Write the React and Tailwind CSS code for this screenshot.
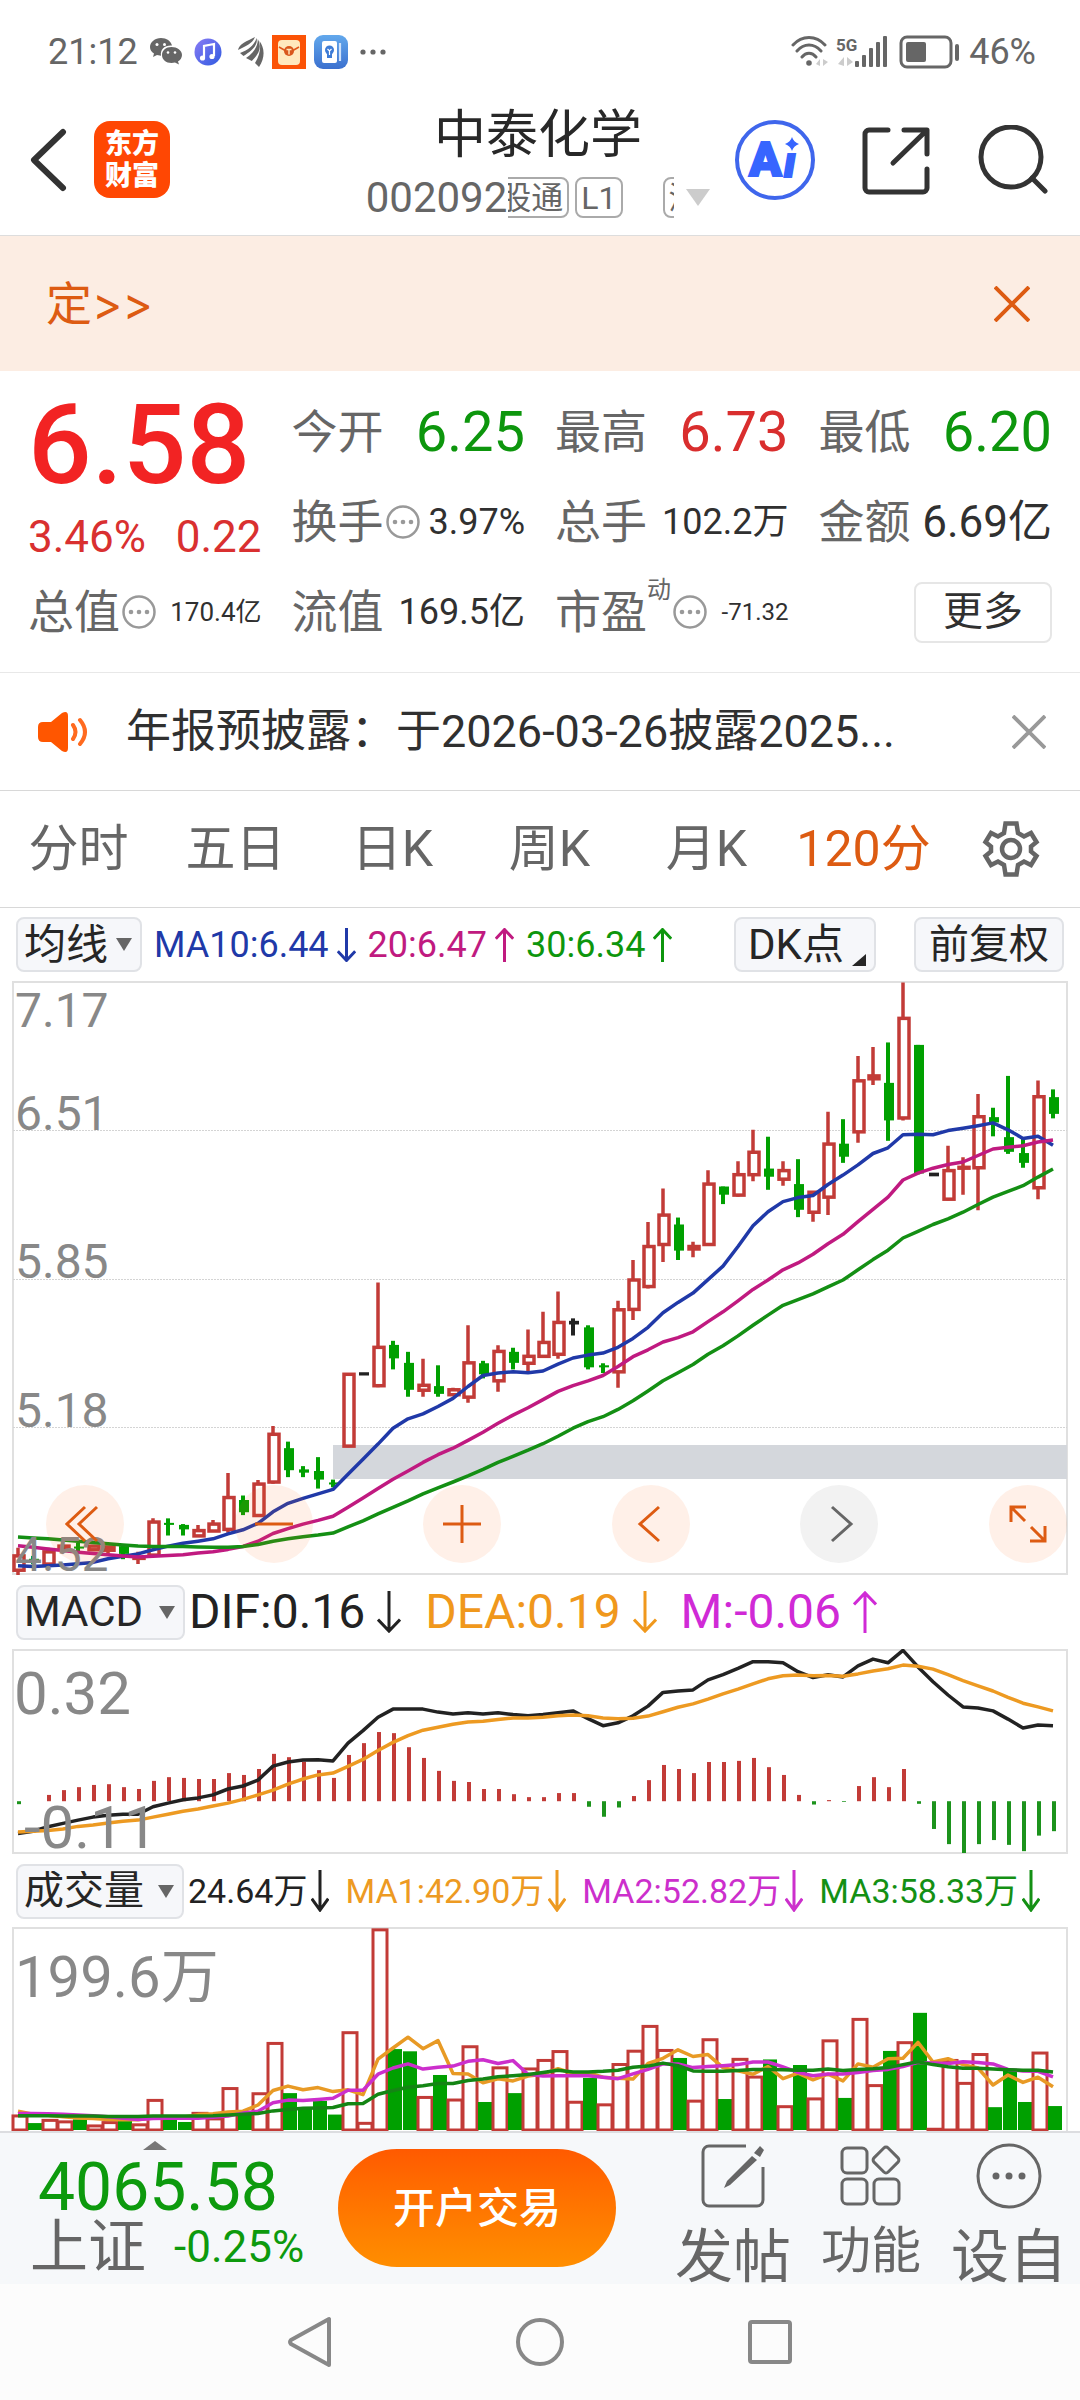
import React, { useState } from 'react';

const RED = '#c23b37';
const GREEN = '#00a000';
const STEP = 15;
const FIRST_X = 18;

const TABS = ['分时', '五日', '日K', '周K', '月K', '120分'];

// [color, high, top, bottom, low]
const CANDLES = [
    ['r', 1440, 1460, 1495, 1508], ['g', 1460, 1467, 1475, 1480], ['r', 1440, 1450, 1480, 1480], ['r', 1433, 1436, 1443, 1443],
    ['g', 1428, 1437, 1442, 1450], ['r', 1433, 1436, 1445, 1445], ['r', 1436, 1438, 1446, 1460], ['g', 1436, 1436, 1455, 1468],
    ['r', 1450, 1464, 1466, 1480], ['r', 1368, 1377, 1458, 1462], ['g', 1368, 1379, 1384, 1410], ['g', 1382, 1384, 1395, 1410],
    ['r', 1384, 1398, 1411, 1413], ['r', 1372, 1382, 1399, 1400], ['r', 1257, 1317, 1395, 1403], ['g', 1312, 1323, 1353, 1360],
    ['r', 1274, 1284, 1361, 1364], ['r', 1142, 1162, 1279, 1283], ['g', 1180, 1196, 1250, 1267], ['g', 1240, 1248, 1256, 1267],
    ['g', 1218, 1252, 1273, 1295], ['g', 1273, 1280, 1285, 1292], ['r', 1012, 1015, 1191, 1194], ['k', 1012, 1010, 1018, 1016],
    ['r', 790, 949, 1043, 1047], ['g', 933, 943, 976, 1003], ['g', 960, 987, 1053, 1070], ['r', 977, 1042, 1054, 1070],
    ['g', 993, 1044, 1063, 1070], ['r', 1048, 1053, 1065, 1067], ['r', 895, 987, 1071, 1085], ['g', 982, 988, 1015, 1025],
    ['r', 944, 959, 1031, 1058], ['g', 950, 960, 987, 1003], ['r', 905, 971, 988, 1007], ['r', 862, 937, 971, 975],
    ['r', 812, 888, 966, 977], ['k', 878, 884, 893, 920], ['g', 895, 900, 998, 1003], ['g', 988, 993, 998, 1012],
    ['r', 835, 857, 1009, 1048], ['r', 735, 784, 856, 882], ['r', 642, 702, 800, 805], ['r', 560, 625, 697, 740],
    ['g', 631, 648, 712, 735], ['r', 690, 702, 708, 728], ['r', 515, 549, 697, 700], ['g', 555, 555, 575, 598],
    ['r', 493, 526, 576, 580], ['r', 416, 471, 526, 542], ['g', 433, 511, 531, 563], ['r', 493, 516, 537, 553],
    ['g', 488, 549, 612, 630], ['r', 566, 569, 618, 641], ['r', 372, 451, 581, 625], ['g', 390, 450, 482, 497],
    ['r', 235, 296, 421, 448], ['r', 213, 284, 291, 306], ['g', 202, 301, 393, 443], ['r', 55, 143, 387, 393],
    ['g', 208, 208, 523, 525], ['k', 522, 521, 530, 526], ['r', 455, 516, 586, 589], ['r', 483, 508, 510, 575],
    ['r', 328, 384, 509, 613], ['g', 362, 385, 398, 432], ['g', 284, 434, 470, 475], ['g', 437, 473, 497, 509],
    ['r', 295, 335, 558, 586], ['g', 317, 336, 377, 388],
];
const MA10 = [1484, 1486, 1484, 1482, 1479, 1476, 1467, 1461, 1455, 1445, 1436, 1429, 1424, 1418, 1406, 1396, 1380, 1352, 1331, 1319, 1308, 1297, 1260, 1223, 1186, 1147, 1124, 1112, 1094, 1074, 1045, 1018, 1012, 1009, 1011, 1007, 990, 975, 968, 963, 949, 927, 900, 864, 839, 816, 783, 750, 702, 651, 617, 592, 582, 577, 550, 527, 502, 474, 460, 428, 427, 428, 418, 412, 406, 399, 416, 437, 432, 454];
const MA20 = [1435, 1439, 1443, 1447, 1451, 1454, 1457, 1460, 1463, 1461, 1459, 1457, 1453, 1450, 1444, 1437, 1424, 1405, 1393, 1382, 1373, 1363, 1341, 1318, 1295, 1272, 1252, 1231, 1212, 1196, 1177, 1157, 1135, 1115, 1097, 1077, 1057, 1043, 1031, 1018, 996, 972, 955, 936, 925, 911, 886, 862, 835, 807, 784, 759, 742, 721, 695, 672, 641, 611, 581, 539, 522, 510, 501, 495, 479, 463, 459, 455, 446, 441];
const MA30 = [1414, 1416, 1418, 1421, 1424, 1427, 1430, 1433, 1436, 1437, 1437, 1437, 1438, 1439, 1439, 1437, 1432, 1424, 1418, 1413, 1409, 1404, 1389, 1374, 1357, 1341, 1325, 1308, 1293, 1279, 1264, 1248, 1231, 1216, 1201, 1185, 1167, 1147, 1131, 1119, 1101, 1080, 1056, 1031, 1011, 991, 966, 945, 921, 895, 870, 846, 832, 818, 801, 784, 759, 734, 711, 681, 665, 648, 634, 618, 599, 581, 567, 553, 532, 512];

const MACD_ZERO = 652;
const MACD_BARS = [660, 652, 635, 622, 614, 608, 606, 614, 619, 597, 587, 589, 592, 592, 576, 581, 565, 524, 533, 545, 568, 589, 527, 495, 465, 468, 506, 535, 570, 597, 600, 619, 619, 633, 641, 641, 630, 630, 667, 694, 669, 638, 595, 554, 565, 576, 546, 546, 543, 535, 560, 581, 635, 661, 649, 654, 611, 587, 614, 565, 659, 727, 768, 792, 768, 757, 770, 787, 745, 733];
const DIF = [739, 733, 721, 712, 703, 695, 690, 687, 687, 667, 657, 648, 643, 635, 619, 611, 595, 557, 546, 541, 540, 543, 495, 461, 425, 403, 403, 403, 411, 416, 413, 416, 413, 418, 421, 418, 413, 408, 429, 448, 440, 421, 395, 358, 354, 351, 324, 310, 293, 275, 275, 278, 302, 318, 310, 316, 286, 268, 278, 244, 289, 329, 365, 397, 400, 408, 430, 454, 446, 448];
const DEA = [735, 733, 731, 727, 720, 716, 711, 706, 703, 695, 687, 679, 673, 665, 657, 647, 635, 622, 606, 592, 581, 576, 558, 539, 515, 493, 475, 460, 452, 444, 438, 436, 431, 427, 427, 425, 421, 419, 421, 427, 429, 428, 422, 410, 398, 389, 376, 362, 349, 335, 321, 313, 311, 313, 312, 314, 308, 300, 294, 284, 287, 295, 310, 326, 340, 354, 371, 387, 397, 408];

const VOLUME = [
    ['r', 1500], ['g', 1522], ['r', 1512], ['r', 1516], ['g', 1512], ['r', 1527], ['r', 1518], ['g', 1516], ['r', 1524], ['r', 1458],
    ['g', 1513], ['g', 1519], ['r', 1493], ['r', 1508], ['r', 1426], ['g', 1493], ['r', 1440], ['r', 1304], ['g', 1441], ['g', 1481],
    ['g', 1462], ['g', 1499], ['r', 1275], ['r', 1520], ['r', 997], ['g', 1322], ['g', 1328], ['r', 1450], ['g', 1392], ['r', 1457],
    ['r', 1313], ['g', 1465], ['r', 1370], ['g', 1441], ['r', 1373], ['r', 1350], ['r', 1326], ['r', 1463], ['g', 1400], ['r', 1470],
    ['r', 1361], ['r', 1325], ['r', 1258], ['r', 1323], ['g', 1346], ['r', 1460], ['r', 1294], ['g', 1457], ['r', 1347], ['r', 1395],
    ['g', 1350], ['r', 1475], ['g', 1365], ['r', 1454], ['r', 1297], ['g', 1454], ['r', 1239], ['r', 1418], ['g', 1327], ['r', 1302],
    ['g', 1224], ['r', 1536], ['r', 1350], ['r', 1412], ['r', 1334], ['g', 1479], ['g', 1378], ['g', 1465], ['r', 1330], ['g', 1476],
];
const VOL_MA1 = [1490, 1498, 1501, 1505, 1508, 1510, 1512, 1513, 1513, 1508, 1506, 1506, 1499, 1497, 1492, 1490, 1473, 1434, 1422, 1432, 1426, 1437, 1432, 1445, 1349, 1319, 1290, 1321, 1299, 1388, 1389, 1413, 1402, 1408, 1395, 1390, 1375, 1388, 1386, 1398, 1401, 1403, 1361, 1347, 1324, 1342, 1337, 1372, 1381, 1390, 1369, 1402, 1387, 1405, 1390, 1408, 1362, 1371, 1348, 1347, 1304, 1357, 1348, 1364, 1373, 1419, 1392, 1412, 1398, 1424];
const VOL_MA2 = [1496, 1496, 1497, 1498, 1500, 1502, 1505, 1509, 1512, 1510, 1509, 1509, 1509, 1506, 1503, 1495, 1490, 1467, 1460, 1461, 1458, 1455, 1433, 1433, 1390, 1373, 1362, 1376, 1371, 1368, 1355, 1351, 1361, 1353, 1390, 1395, 1394, 1394, 1394, 1398, 1402, 1389, 1377, 1362, 1362, 1372, 1369, 1367, 1364, 1357, 1357, 1370, 1385, 1394, 1389, 1389, 1385, 1380, 1377, 1369, 1358, 1360, 1361, 1356, 1358, 1362, 1377, 1381, 1382, 1397];
const VOL_MA3 = [1502, 1502, 1502, 1503, 1503, 1503, 1504, 1504, 1504, 1503, 1503, 1503, 1503, 1502, 1500, 1498, 1496, 1489, 1485, 1482, 1481, 1480, 1470, 1469, 1444, 1434, 1425, 1421, 1415, 1415, 1407, 1403, 1397, 1394, 1391, 1385, 1379, 1384, 1384, 1382, 1379, 1371, 1368, 1360, 1367, 1381, 1382, 1382, 1380, 1377, 1377, 1378, 1379, 1379, 1376, 1380, 1377, 1375, 1372, 1364, 1356, 1364, 1370, 1374, 1374, 1376, 1378, 1379, 1379, 1384];

const xAt = (i) => FIRST_X + i * STEP;
const priceY = (v) => v / 2.45 - 21;
const macdY = (v) => v / 2.703 - 89;
const volY = (v) => v / 2.703 - 367;

function Line({ data, y, color }) {
    const points = data.map((v, i) => `${xAt(i)},${y(v).toFixed(1)}`).join(' ');
    return <polyline points={points} fill="none" stroke={color} strokeWidth="3.5" strokeLinejoin="round" />;
}

function Candle({ i, data }) {
    const [kind, high, top, bottom, low] = data;
    const x = xAt(i);
    const yTop = priceY(top);
    const yBottom = priceY(bottom);
    if (kind === 'r') {
        return (
            <g stroke={RED} strokeWidth="3.5">
                <path d={`M${x} ${priceY(high)}V${yTop}M${x} ${yBottom}V${priceY(low)}`} />
                <rect x={x - 4} y={yTop} width="10" height={yBottom - yTop} fill="none" />
            </g>
        );
    }
    const color = kind === 'g' ? GREEN : '#222';
    return (
        <g fill={color}>
            <rect x={x - 2} y={priceY(high)} width="4" height={priceY(low) - priceY(high)} />
            <rect x={x - 4} y={yTop} width="10" height={Math.max(yBottom - yTop, 2)} />
        </g>
    );
}

function PriceChart() {
    return (
        <svg viewBox="0 0 1080 594" className="block w-full" role="img" aria-label="K线图">
            <rect x="13" y="1" width="1054" height="592" fill="none" stroke="#e0e0e0" strokeWidth="2" />
            {[149, 298, 446].map((y) => (
                <path key={y} d={`M13 ${y}.5H1067`} stroke="#d4d4d4" strokeWidth="1" strokeDasharray="2 1" />
            ))}
            <rect x="333" y="464" width="734" height="34" fill="#d4d7dc" />
            {CANDLES.map((c, i) => <Candle key={i} i={i} data={c} />)}
            <Line data={MA10} y={priceY} color="#2039a8" />
            <Line data={MA20} y={priceY} color="#c01a80" />
            <Line data={MA30} y={priceY} color="#148f14" />
            <g className="text-[48px]" fill="#888">
                <text x="15" y="46">7.17</text>
                <text x="15" y="149">6.51</text>
                <text x="15" y="297">5.85</text>
                <text x="15" y="446">5.18</text>
                <text x="15" y="590">4.52</text>
            </g>
        </svg>
    );
}

function MacdChart() {
    return (
        <svg viewBox="0 0 1080 206" className="block w-full" role="img" aria-label="MACD">
            <rect x="13" y="1" width="1054" height="203" fill="none" stroke="#e0e0e0" strokeWidth="2" />
            {MACD_BARS.map((v, i) => (
                <path key={i} d={`M${xAt(i) + 1} ${macdY(MACD_ZERO)}V${macdY(v)}`} stroke={v < MACD_ZERO ? RED : '#1c931c'} strokeWidth="4" />
            ))}
            <Line data={DIF} y={macdY} color="#222" />
            <Line data={DEA} y={macdY} color="#ed9a22" />
            <g className="text-[60px]" fill="#888">
                <text x="14" y="65">0.32</text>
                <text x="24" y="199">-0.11</text>
            </g>
        </svg>
    );
}

function VolumeChart() {
    return (
        <svg viewBox="0 0 1080 204" className="block w-full" role="img" aria-label="成交量">
            <path d="M13 204V1H1067V204" fill="none" stroke="#e0e0e0" strokeWidth="2" />
            {VOLUME.map(([kind, v], i) => kind === 'r'
                ? <rect key={i} x={xAt(i) - 5} y={volY(v) + 1} width="14" height={202 - volY(v)} fill="#fff" stroke={RED} strokeWidth="3" />
                : <rect key={i} x={xAt(i) - 5} y={volY(v)} width="14" height={203 - volY(v)} fill={GREEN} />)}
            <Line data={VOL_MA1} y={volY} color="#e89a25" />
            <Line data={VOL_MA2} y={volY} color="#cc2fcc" />
            <Line data={VOL_MA3} y={volY} color="#148514" />
            <text x="15" y="70" className="text-[58px]" fill="#888">199.6万</text>
        </svg>
    );
}

function StatusBar() {
    return (
        <div className="flex h-[104px] items-center justify-between pl-12 pr-11 text-[36px] text-[#666]">
            <div className="flex items-center">
                <span>21:12</span>
                <svg className="ml-3" width="32" height="28" viewBox="0 0 32 28" fill="#666">
                    <path d="M11 0C5 0 0 4 0 9c0 3 1.500 5 4 6.500L3 19l4-2 4 .8C10 11 15 7 22 7.500 21 3 16.500 0 11 0z" />
                    <path d="M21.500 9C16 9 12 12.500 12 17s4 8 9.500 8l3.500-.5 4 2-1-3c2.500-1.500 4-4 4-6.500C32 12.500 27 9 21.500 9z" />
                    <g fill="#fff"><circle cx="7" cy="6.500" r="1.500" /><circle cx="14.500" cy="6.500" r="1.500" /><circle cx="18" cy="14.500" r="1.300" /><circle cx="25" cy="14.500" r="1.300" /></g>
                </svg>
                <svg className="ml-3" width="28" height="28" viewBox="0 0 28 28">
                    <defs><linearGradient id="music" x1="0" y1="0" x2="1" y2="1"><stop offset="0" stopColor="#8a7cf5" /><stop offset="1" stopColor="#2f5ae0" /></linearGradient></defs>
                    <circle cx="14" cy="14" r="13.500" fill="url(#music)" />
                    <path d="M10 20V8l10-2v12" fill="none" stroke="#fff" strokeWidth="2.200" />
                    <circle cx="8.500" cy="20" r="2.600" fill="#fff" /><circle cx="18" cy="18.500" r="2.600" fill="#fff" />
                </svg>
                <svg className="ml-4" width="26" height="30" viewBox="0 0 26 30" fill="#666">
                    <path d="M0 13C1 7 9 4 17 0c-3 7-9 9-16 12.500z" />
                    <path d="M2 16C11 13 17 7 18.500 1c2 7-5 13-13 18z" />
                    <path d="M8 21C17 15 20 8 19.800 2c4 8 2 14-6 22z" />
                    <path d="M17 26c5-8 6-15 4.500-22 5 7 6 16-.5 26z" />
                </svg>
                <svg className="ml-2" width="34" height="34" viewBox="0 0 34 34">
                    <rect width="34" height="34" fill="#fb5306" />
                    <rect x="6" y="5" width="22" height="25" rx="4" fill="#ffe9bd" />
                    <path d="M7 12l7 4M27 12l-7 4" stroke="#e0561a" strokeWidth="1.500" />
                    <circle cx="17" cy="16" r="5" fill="#d9571b" />
                    <path d="M14.500 14.500h5M17 14.500v5" stroke="#ffe9bd" strokeWidth="1.400" />
                </svg>
                <svg className="ml-2" width="34" height="34" viewBox="0 0 34 34">
                    <defs><linearGradient id="note" x1="0" y1="0" x2="0" y2="1"><stop offset="0" stopColor="#62a8ec" /><stop offset="1" stopColor="#3b70cf" /></linearGradient></defs>
                    <rect width="34" height="34" rx="9" fill="url(#note)" />
                    <rect x="8" y="6" width="15" height="22" rx="2" fill="#fff" />
                    <path d="M26 8v18" stroke="#cfe2fa" strokeWidth="2.200" />
                    <circle cx="15.500" cy="15" r="4.500" fill="#3d7bd6" /><path d="M13 18h5v5h-5z" fill="#3d7bd6" />
                    <path d="M13.500 14l2 2 2-2M15.500 16v4" fill="none" stroke="#fff" strokeWidth="1.200" />
                </svg>
                <svg className="ml-3" width="26" height="8" viewBox="0 0 26 8" fill="#666"><circle cx="3" cy="4" r="2.600" /><circle cx="13" cy="4" r="2.600" /><circle cx="23" cy="4" r="2.600" /></svg>
            </div>
            <div className="flex items-center">
                <svg width="170" height="34" viewBox="0 0 170 34" fill="none" stroke="#666">
                    <g strokeWidth="3" strokeLinecap="round">
                        <path d="M2 10C11 0 25 0 34 10M6 16C13 8 23 8 30 16M11 22C15 17 21 17 25 22" />
                        <circle cx="18" cy="28" r="1.800" fill="#666" strokeWidth="2" />
                    </g>
                    <path d="M29 24v7l-4-2zM32 24v7l5-4zM53 22v9l-6-2zM56 22v9l6-4z" fill="#ccc" stroke="none" />
                    <text x="45" y="16" className="text-[17px] font-bold" fill="#666" stroke="none">5G</text>
                    <g fill="#666" stroke="none">
                        <rect x="64" y="26" width="4" height="6" rx="1" /><rect x="71" y="20" width="4" height="12" rx="1" /><rect x="78" y="13" width="4" height="19" rx="1" /><rect x="85" y="7" width="4" height="25" rx="1" /><rect x="92" y="1" width="4" height="31" rx="1" />
                        <rect x="115" y="7" width="20" height="20" rx="2" /><rect x="164" y="9" width="4" height="17" rx="2" />
                    </g>
                    <rect x="110" y="2" width="50" height="30" rx="6" strokeWidth="3" />
                </svg>
                <span className="ml-2">46%</span>
            </div>
        </div>
    );
}

function Tag({ children }) {
    return <span className="flex h-[41px] shrink-0 items-center rounded-lg border-2 border-[#aaa] px-1 text-[32px] leading-none">{children}</span>;
}

function Header() {
    return (
        <header className="flex h-[132px] items-center border-b border-[#ddd] pb-5">
            <div className="flex flex-1 items-center pl-7">
                <button aria-label="返回">
                    <svg width="42" height="64" viewBox="0 0 42 64" fill="none" stroke="#333" strokeWidth="6" strokeLinecap="round" strokeLinejoin="round"><path d="M35 4L6 32l29 28" /></svg>
                </button>
                <a href="#home" className="ml-6 flex h-[77px] w-[76px] flex-col items-center justify-center rounded-2xl bg-[#ff4703] text-[27px] font-black leading-8 text-white">
                    <span>东方</span>
                    <span>财富</span>
                </a>
            </div>
            <div className="flex flex-col items-center pt-2">
                <h1 className="text-[52px] leading-[60px] text-[#282828]">中泰化学</h1>
                <div className="mt-2 flex items-center text-[42px] leading-[48px] text-[#666]">
                    <span>002092</span>
                    <div className="ml-px flex w-[166px] overflow-hidden">
                        <div className="-ml-[47px] flex">
                            <Tag>深股通</Tag>
                            <span className="w-[6px] shrink-0" />
                            <Tag>L1</Tag>
                            <span className="w-10 shrink-0" />
                            <Tag>深股通</Tag>
                        </div>
                    </div>
                    <svg className="ml-3" width="24" height="18" viewBox="0 0 24 18" fill="#ccc"><path d="M0 0h24L12 17z" /></svg>
                </div>
            </div>
            <div className="flex flex-1 items-center justify-end gap-[45px] pr-8">
                <button aria-label="Ai">
                    <svg width="82" height="82" viewBox="0 0 82 82">
                        <circle cx="41" cy="41" r="38" fill="none" stroke="#3f66ec" strokeWidth="4" />
                        <text x="15" y="57" className="text-[48px] font-black" fill="#3765ff" stroke="#3765ff" strokeWidth="2">A</text>
                        <text x="50" y="58" className="text-[42px] font-black italic" fill="#3765ff" stroke="#3765ff" strokeWidth="2">ı</text>
                        <path d="M58 18q1.500 5 7 7-5.500 2-7 7-1.500-5-7-7 5.500-2 7-7z" fill="#3765ff" />
                    </svg>
                </button>
                <button aria-label="分享">
                    <svg width="70" height="70" viewBox="0 0 70 70" fill="none" stroke="#333" strokeWidth="5" strokeLinecap="round" strokeLinejoin="round">
                        <path d="M27 5H8a4 4 0 0 0-4 4v54a4 4 0 0 0 4 4h54a4 4 0 0 0 4-4V44M43 5h23v24M32 38L64 7" />
                    </svg>
                </button>
                <button aria-label="搜索">
                    <svg width="72" height="70" viewBox="0 0 72 70" fill="none" stroke="#333" strokeWidth="5" strokeLinecap="round">
                        <circle cx="35" cy="32" r="30" /><path d="M56 53l13 13" />
                    </svg>
                </button>
            </div>
        </header>
    );
}

function Cross({ size, color }) {
    return <svg width={size} height={size} viewBox="0 0 36 36" stroke={color} strokeWidth="4"><path d="M1 1l34 34M35 1L1 35" /></svg>;
}

function Hint() {
    return (
        <svg className="shrink-0" width="34" height="34" viewBox="0 0 34 34" fill="#999">
            <circle cx="17" cy="17" r="15.500" fill="none" stroke="#999" strokeWidth="2.500" />
            <circle cx="9" cy="17" r="2.300" /><circle cx="17" cy="17" r="2.300" /><circle cx="25" cy="17" r="2.300" />
        </svg>
    );
}

function Quote({ label, hint, sup, children }) {
    return (
        <div className="flex h-[90px] items-center justify-between whitespace-nowrap text-[#303030]">
            <div className="flex items-center text-[46px] text-[#666]">
                <span>{label}</span>
                {sup && <sup className="static self-start text-[24px] leading-6">{sup}</sup>}
                {hint && <span className="ml-[2px]"><Hint /></span>}
            </div>
            {children}
        </div>
    );
}

function QuotePanel() {
    return (
        <section className="grid grid-cols-4 gap-x-[30px] border-b border-[#e8e8e8] px-7 pb-[15px] pt-4">
            <div className="row-span-2 flex flex-col pt-2">
                <span className="text-[112px] font-medium leading-[100px] text-[#f22323]">6.58</span>
                <div className="mt-3 flex justify-between text-[44px] leading-[60px] text-[#d93030]">
                    <span>3.46%</span>
                    <span>0.22</span>
                </div>
            </div>
            <Quote label="今开"><span className="text-[56px] text-[#0d960d]">6.25</span></Quote>
            <Quote label="最高"><span className="text-[56px] text-[#d92e2e]">6.73</span></Quote>
            <Quote label="最低"><span className="text-[56px] text-[#0d960d]">6.20</span></Quote>
            <Quote label="换手" hint><span className="text-[36px]">3.97%</span></Quote>
            <Quote label="总手"><span className="text-[36px]">102.2万</span></Quote>
            <Quote label="金额"><span className="text-[44px]">6.69亿</span></Quote>
            <Quote label="总值" hint><span className="text-[26px]">170.4亿</span></Quote>
            <Quote label="流值"><span className="text-[36px]">169.5亿</span></Quote>
            <Quote label="市盈" sup="动" hint><span className="text-[24px]">-71.32</span></Quote>
            <div className="flex items-center justify-end">
                <button className="h-[61px] w-[138px] rounded-lg border-2 border-[#e6e6e6] text-[40px] leading-none text-[#303030]">更多</button>
            </div>
        </section>
    );
}

function Picker({ label, options, className }) {
    return (
        <div className={`flex h-[55px] shrink-0 items-center justify-between rounded-lg border-2 border-[#e0e2e6] bg-[#f6f7fa] pl-[6px] pr-2 text-[#262626] ${className}`}>
            <select aria-label={label} className="appearance-none bg-transparent leading-none outline-none">
                {options.map((o) => <option key={o}>{o}</option>)}
            </select>
            <svg className="pointer-events-none shrink-0" width="16" height="13" viewBox="0 0 16 13" fill="#666"><path d="M0 0h16L8 13z" /></svg>
        </div>
    );
}

function Reading({ text, dir, className, arrow = 'ml-2 h-[34px] w-[19px]' }) {
    return (
        <span className={`flex items-center whitespace-nowrap ${className}`}>
            {text}
            <svg className={`shrink-0 ${arrow}`} viewBox="0 0 24 44" preserveAspectRatio="none" fill="none" stroke="currentColor" strokeWidth="3">
                <path vectorEffect="non-scaling-stroke" d={dir === 'up' ? 'M12 44V2M1 14L12 2l11 12' : 'M12 0v42M1 30l11 12 11-12'} />
            </svg>
        </span>
    );
}

function ChartButton({ label, d, muted }) {
    return (
        <button aria-label={label} className={`flex size-[78px] items-center justify-center rounded-full ${muted ? 'bg-[#f2f2f2]' : 'bg-[#ff6a1f]/10'}`}>
            <svg width="40" height="40" viewBox="0 0 40 40" fill="none" stroke={muted ? '#666' : '#dd5b12'} strokeWidth="3"><path d={d} /></svg>
        </button>
    );
}

function FooterButton({ label, children, className }) {
    return (
        <button className="flex h-full flex-col items-center justify-start whitespace-nowrap text-[#666]">
            <svg className="shrink-0" width="66" height="66" viewBox="0 0 66 66" fill="none" stroke="#666" strokeWidth="3">{children}</svg>
            <span className={className}>{label}</span>
        </button>
    );
}

export default function App() {
    const [tab, setTab] = useState('120分');

    return (
        <div className="min-h-screen bg-white font-['Roboto','Noto_Sans_CJK_SC',sans-serif]">
            <StatusBar />
            <Header />

            {/* 滚动提示条 */}
            <div className="flex h-[135px] items-center justify-between bg-[#fcede3] pl-[46px] pr-[50px] text-[46px] text-[#dd5b12]">
                <a href="#open">定<span className="font-['Inter',sans-serif]">&gt;&gt;</span></a>
                <button aria-label="关闭"><Cross size={36} color="#dd5b12" /></button>
            </div>

            <QuotePanel />

            <div className="flex h-[118px] items-center border-b border-[#d8d8d8] pl-[38px] pr-[34px]">
                <svg width="50" height="42" viewBox="0 0 50 42">
                    <path d="M5 11h8L24 2q6-3 6 3v32q0 6-6 3L13 31H5q-5 0-5-5V16q0-5 5-5z" fill="#ff5600" />
                    <path d="M35 14q5 7 0 14M42 9q10 12 0 24" fill="none" stroke="#ff6a1f" strokeWidth="4" strokeLinecap="round" />
                </svg>
                <p className="ml-[38px] flex-1 truncate text-[45px] text-[#303030]">年报预披露：于2026-03-26披露2025...</p>
                <button aria-label="关闭公告"><Cross size={34} color="#999" /></button>
            </div>

            <nav className="flex h-[117px] items-center border-b border-[#d8d8d8] text-[50px]">
                {TABS.map((t) => (
                    <button key={t} onClick={() => setTab(t)} className={`flex-1 whitespace-nowrap ${t === tab ? 'text-[#dd5b12]' : 'text-[#666]'}`}>{t}</button>
                ))}
                <button aria-label="设置" className="flex w-[138px] justify-center">
                    <svg width="58" height="58" viewBox="0 0 58 58" fill="none" stroke="#666" strokeWidth="4.500">
                        <path d="M23.500 3.500h11L36 13l6 3.500 7-3.500 5.500 9L49 26.500v5l5.500 4.500-5.500 9-7-3.500L36 45l-1.500 9.500h-11L22 45l-6-3.500L9 45l-5.500-9L9 31.500v-5L3.500 22 9 13l7 3.500 6-3.500z" />
                        <circle cx="29" cy="29" r="9" />
                    </svg>
                </button>
            </nav>

            <div className="flex h-[73px] items-center px-4 text-[36px]">
                <Picker label="均线" options={['均线']} className="w-[126px] text-[42px]" />
                <Reading text="MA10:6.44" dir="down" className="ml-3 text-[#2039a8]" />
                <Reading text="20:6.47" dir="up" className="ml-3 text-[#c01a80]" />
                <Reading text="30:6.34" dir="up" className="ml-3 text-[#0d960d]" />
                <button className="ml-auto flex h-[55px] w-[142px] items-center rounded-lg border-2 border-[#e0e2e6] bg-[#f6f7fa] pl-3 text-[42px] leading-none text-[#262626]">
                    DK点
                    <svg className="mb-1 ml-2 self-end" width="14" height="12" viewBox="0 0 14 12" fill="#262626"><path d="M14 0v12H0z" /></svg>
                </button>
                <button className="ml-[38px] h-[55px] w-[150px] rounded-lg border-2 border-[#e0e2e6] bg-[#f6f7fa] text-[40px] leading-none text-[#262626]">前复权</button>
            </div>

            <div className="relative">
                <PriceChart />
                {/* 图表浮动操作 */}
                <div className="absolute inset-x-0 bottom-3 flex justify-between pl-[46px] pr-[13px]">
                    <ChartButton label="最早" d="M20 3L2 20l18 17M32 3L14 20l18 17" />
                    <ChartButton label="缩小" d="M1 20h38" />
                    <ChartButton label="放大" d="M1 20h38M20 1v38" />
                    <ChartButton label="左移" d="M28 3L9 20l19 17" />
                    <ChartButton label="右移" muted d="M13 3l19 17-19 17" />
                    <ChartButton label="全屏" d="M3 18V3h15M3 3l14 14M37 22v15H22M37 37L23 23" />
                </div>
            </div>

            <div className="flex h-[74px] items-center pl-4 text-[48px]">
                <Picker label="副图指标" options={['MACD']} className="w-[169px] text-[42px]" />
                <Reading text="DIF:0.16" dir="down" className="ml-1 text-[#222]" arrow="ml-3 h-[42px] w-6" />
                <Reading text="DEA:0.19" dir="down" className="ml-6 text-[#f0981c]" arrow="ml-3 h-[42px] w-6" />
                <Reading text="M:-0.06" dir="up" className="ml-6 text-[#d02ad6]" arrow="ml-3 h-[42px] w-6" />
            </div>
            <MacdChart />

            <div className="flex h-[72px] items-center pl-4 text-[34px]">
                <Picker label="成交量指标" options={['成交量']} className="w-[168px] text-[40px]" />
                <Reading text="24.64万" dir="down" className="ml-1 text-[#222]" arrow="ml-1 h-[42px] w-[18px]" />
                <Reading text="MA1:42.90万" dir="down" className="ml-4 text-[#ed9a22]" arrow="ml-1 h-[42px] w-[18px]" />
                <Reading text="MA2:52.82万" dir="down" className="ml-4 text-[#cc2fcc]" arrow="ml-1 h-[42px] w-[18px]" />
                <Reading text="MA3:58.33万" dir="down" className="ml-4 text-[#149014]" arrow="ml-1 h-[42px] w-[18px]" />
            </div>
            <VolumeChart />

            <footer className="flex h-[153px] overflow-hidden border-t-2 border-[#dcdde0] bg-[#f6f8fa]">
                <button className="flex w-[338px] flex-col pl-[30px] pt-2 text-left">
                    <svg className="ml-[113px]" width="24" height="9" viewBox="0 0 24 9" fill="#777"><path d="M12 0l12 9H0z" /></svg>
                    <span className="pl-2 text-[66px] leading-[76px] text-[#0d9a0d]">4065.58</span>
                    <span className="flex items-center gap-7 whitespace-nowrap text-[58px] leading-[42px] text-[#666]">
                        上证
                        <span className="text-[44px] text-[#0d9a0d]">-0.25%</span>
                    </span>
                </button>
                <button className="mt-4 h-[118px] w-[278px] rounded-full bg-linear-to-b from-[#ff5a00] to-[#ff8e00] text-[42px] font-medium text-white">开户交易</button>
                <div className="flex flex-1 justify-between pl-[59px] pr-[13px] pt-[10px]">
                    <FooterButton label="发帖" className="text-[58px] leading-[96px]">
                        <path d="M46 3H9a6 6 0 0 0-6 6v48a6 6 0 0 0 6 6h48a6 6 0 0 0 6-6V24" />
                        <path d="M60 3l4 4-4 7-6-4zM52 13l5 4-27 25-6 3 3-7z" fill="#666" stroke="none" />
                    </FooterButton>
                    <FooterButton label="功能" className="text-[50px] leading-[84px]">
                        <rect x="4" y="5" width="25" height="25" rx="5" /><rect x="4" y="36" width="25" height="25" rx="5" /><rect x="36" y="36" width="25" height="25" rx="5" />
                        <rect x="38" y="7" width="20" height="20" rx="3" transform="rotate(45 48 17)" />
                    </FooterButton>
                    <FooterButton label="设自" className="text-[58px] leading-[96px]">
                        <circle cx="33" cy="33" r="31" />
                        <g fill="#666" stroke="none"><circle cx="20" cy="33" r="3.500" /><circle cx="33" cy="33" r="3.500" /><circle cx="46" cy="33" r="3.500" /></g>
                    </FooterButton>
                </div>
            </footer>

            <div className="flex h-[116px] items-center justify-center gap-[182px] bg-[#fcfcfc]">
                <button aria-label="系统返回"><svg width="46" height="54" viewBox="0 0 46 54" fill="none" stroke="#888" strokeWidth="4" strokeLinejoin="round"><path d="M42 4v46L4 29q-2-2 0-4z" /></svg></button>
                <button aria-label="主屏幕"><svg width="50" height="50" viewBox="0 0 50 50" fill="none" stroke="#888" strokeWidth="4"><circle cx="25" cy="25" r="22" /></svg></button>
                <button aria-label="最近任务"><svg width="46" height="46" viewBox="0 0 46 46" fill="none" stroke="#888" strokeWidth="4"><rect x="3" y="3" width="40" height="40" rx="2" /></svg></button>
            </div>
        </div>
    );
}
